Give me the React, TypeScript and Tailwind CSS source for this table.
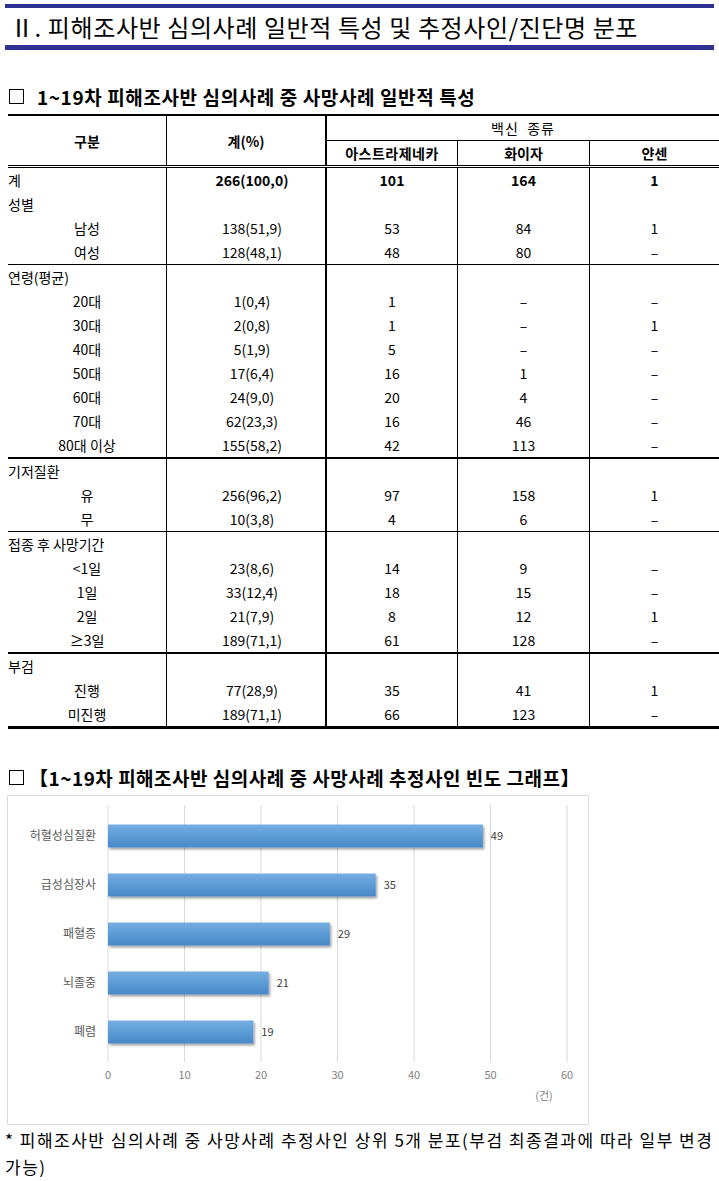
import React from "react";

type Row = {
  label: string;
  sub?: boolean;
  bold?: boolean;
  vals?: string[];
};

type Group = {
  rows: Row[];
  border: string;
};

const groups: Group[] = [
  {
    border: "border-b border-black",
    rows: [
      { label: "계", bold: true, vals: ["266(100,0)", "101", "164", "1"] },
      { label: "성별" },
      { label: "남성", sub: true, vals: ["138(51,9)", "53", "84", "1"] },
      { label: "여성", sub: true, vals: ["128(48,1)", "48", "80", "–"] },
    ],
  },
  {
    border: "border-b-2 border-black",
    rows: [
      { label: "연령(평균)" },
      { label: "20대", sub: true, vals: ["1(0,4)", "1", "–", "–"] },
      { label: "30대", sub: true, vals: ["2(0,8)", "1", "–", "1"] },
      { label: "40대", sub: true, vals: ["5(1,9)", "5", "–", "–"] },
      { label: "50대", sub: true, vals: ["17(6,4)", "16", "1", "–"] },
      { label: "60대", sub: true, vals: ["24(9,0)", "20", "4", "–"] },
      { label: "70대", sub: true, vals: ["62(23,3)", "16", "46", "–"] },
      { label: "80대 이상", sub: true, vals: ["155(58,2)", "42", "113", "–"] },
    ],
  },
  {
    border: "border-b border-black",
    rows: [
      { label: "기저질환" },
      { label: "유", sub: true, vals: ["256(96,2)", "97", "158", "1"] },
      { label: "무", sub: true, vals: ["10(3,8)", "4", "6", "–"] },
    ],
  },
  {
    border: "border-b-2 border-black",
    rows: [
      { label: "접종 후 사망기간" },
      { label: "<1일", sub: true, vals: ["23(8,6)", "14", "9", "–"] },
      { label: "1일", sub: true, vals: ["33(12,4)", "18", "15", "–"] },
      { label: "2일", sub: true, vals: ["21(7,9)", "8", "12", "1"] },
      { label: "≥3일", sub: true, vals: ["189(71,1)", "61", "128", "–"] },
    ],
  },
  {
    border: "border-b-[3px] border-black",
    rows: [
      { label: "부검" },
      { label: "진행", sub: true, vals: ["77(28,9)", "35", "41", "1"] },
      { label: "미진행", sub: true, vals: ["189(71,1)", "66", "123", "–"] },
    ],
  },
];

const causes = [
  { name: "허혈성심질환", value: 49 },
  { name: "급성심장사", value: 35 },
  { name: "패혈증", value: 29 },
  { name: "뇌졸중", value: 21 },
  { name: "폐렴", value: 19 },
];

const Square = () => (
  <span className="inline-block w-[15px] h-[15px] border border-black mr-[13px] shrink-0" />
);

function TableRow({ row }: { row: Row }) {
  const v = row.vals ?? ["", "", "", ""];
  return (
    <div className={`grid grid-cols-[159px_160px_131px_132px_129px] h-[24px] ${row.bold ? "font-bold" : ""}`}>
      <div
        className={`border-r border-black flex items-center ${row.sub ? "justify-center" : "justify-start"} font-normal`}
      >
        {row.label}
      </div>
      <div className="border-r-2 border-black flex items-center justify-center pl-[12px]">{v[0]}</div>
      <div className="border-r border-black flex items-center justify-center">{v[1]}</div>
      <div className="border-r border-black flex items-center justify-center">{v[2]}</div>
      <div className="flex items-center justify-center">{v[3]}</div>
    </div>
  );
}

function Chart() {
  const x0 = 100;
  const unit = 7.65;
  const ticks = [0, 10, 20, 30, 40, 50, 60];
  return (
    <svg width="580" height="328" className="block font-['Noto_Sans_CJK_KR',sans-serif]">
      <defs>
        <linearGradient id="bar" x1="0" y1="0" x2="0" y2="1">
          <stop offset="0" stopColor="#76aee2" />
          <stop offset="0.5" stopColor="#5b9bd5" />
          <stop offset="1" stopColor="#4a88c8" />
        </linearGradient>
        <filter id="shadow" x="-5%" y="-20%" width="115%" height="160%">
          <feDropShadow dx="1.5" dy="2" stdDeviation="1.2" floodColor="#000" floodOpacity="0.35" />
        </filter>
      </defs>
      {ticks.map((t) => (
        <line
          key={t}
          x1={x0 + t * unit}
          x2={x0 + t * unit}
          y1={9}
          y2={266}
          stroke="#d9d9d9"
          strokeWidth="1"
        />
      ))}
      {causes.map((c, i) => {
        const cy = 40 + i * 49;
        const w = c.value * unit;
        return (
          <g key={c.name}>
            <rect x={x0} y={cy - 11.5} width={w} height={23} fill="url(#bar)" filter="url(#shadow)" />
            <text x={88} y={cy + 4} textAnchor="end" fontSize="12" fill="#595959">
              {c.name}
            </text>
            <text x={x0 + w + 8} y={cy + 4} fontSize="11" fill="#404040">
              {c.value}
            </text>
          </g>
        );
      })}
      {ticks.map((t) => (
        <text key={t} x={x0 + t * unit} y={283} textAnchor="middle" fontSize="11" fill="#7f7f7f">
          {t}
        </text>
      ))}
      <text x={536} y={304} textAnchor="middle" fontSize="11" fill="#7f7f7f">
        (건)
      </text>
    </svg>
  );
}

export default function App() {
  return (
    <div className="w-[719px] min-h-[1181px] bg-white text-black font-['Noto_Sans_CJK_KR',sans-serif]">
      {/* Title */}
      <div className="pt-[4px]">
        <div className="mx-[5px] h-[4px] bg-[#2f3192]" />
        <div className="h-[37px] flex items-center pl-[10px] text-[24px] leading-none tracking-[0.6px]">
          Ⅱ. 피해조사반 심의사례 일반적 특성 및 추정사인/진단명 분포
        </div>
        <div className="mx-[5px] h-[5px] bg-[#2f3192]" />
      </div>

      {/* Section 1 */}
      <div className="mt-[35px] h-[22px] flex items-center pl-[9px] text-[19px] font-bold leading-none tracking-[0.6px]">
        <Square />
        <span>1~19차 피해조사반 심의사례 중 사망사례 일반적 특성</span>
      </div>

      <div className="mt-[7px] ml-[8px] text-[14px] leading-none">
        {/* Header */}
        <div className="grid grid-cols-[159px_160px_131px_132px_129px] grid-rows-[25px_24px] border-t-2 border-b-[3px] border-double border-black">
          <div className="row-span-2 border-r border-black flex items-center justify-center font-bold">구분</div>
          <div className="row-span-2 border-r-2 border-black flex items-center justify-center font-bold">계(%)</div>
          <div className="col-span-3 border-b border-black flex items-center justify-center tracking-[1px]">
            백신&nbsp;&nbsp;종류
          </div>
          <div className="border-r border-black flex items-center justify-center font-bold tracking-[0.5px]">
            아스트라제네카
          </div>
          <div className="border-r border-black flex items-center justify-center font-bold">화이자</div>
          <div className="flex items-center justify-center font-bold">얀센</div>
        </div>
        {groups.map((g, gi) => (
          <div key={gi} className={g.border}>
            {g.rows.map((r, ri) => (
              <TableRow key={ri} row={r} />
            ))}
          </div>
        ))}
      </div>

      {/* Section 2 */}
      <div className="mt-[37px] h-[22px] flex items-center pl-[9px] text-[19px] font-bold leading-none tracking-[0.5px]">
        <Square />
        <span className="-ml-[8px]">【1~19차 피해조사반 심의사례 중 사망사례 추정사인 빈도 그래프】</span>
      </div>

      <div className="mt-[7px] ml-[7px] w-[582px] h-[330px] border border-[#d9d9d9]">
        <Chart />
      </div>

      <p className="mt-[1px] pl-[5px] text-[17px] leading-[27px] tracking-[1.5px]">
        <span className="whitespace-nowrap">
          * 피해조사반 심의사례 중 사망사례 추정사인 상위 5개 분포(부검 최종결과에 따라 일부 변경
        </span>
        <br />
        가능)
      </p>
    </div>
  );
}
